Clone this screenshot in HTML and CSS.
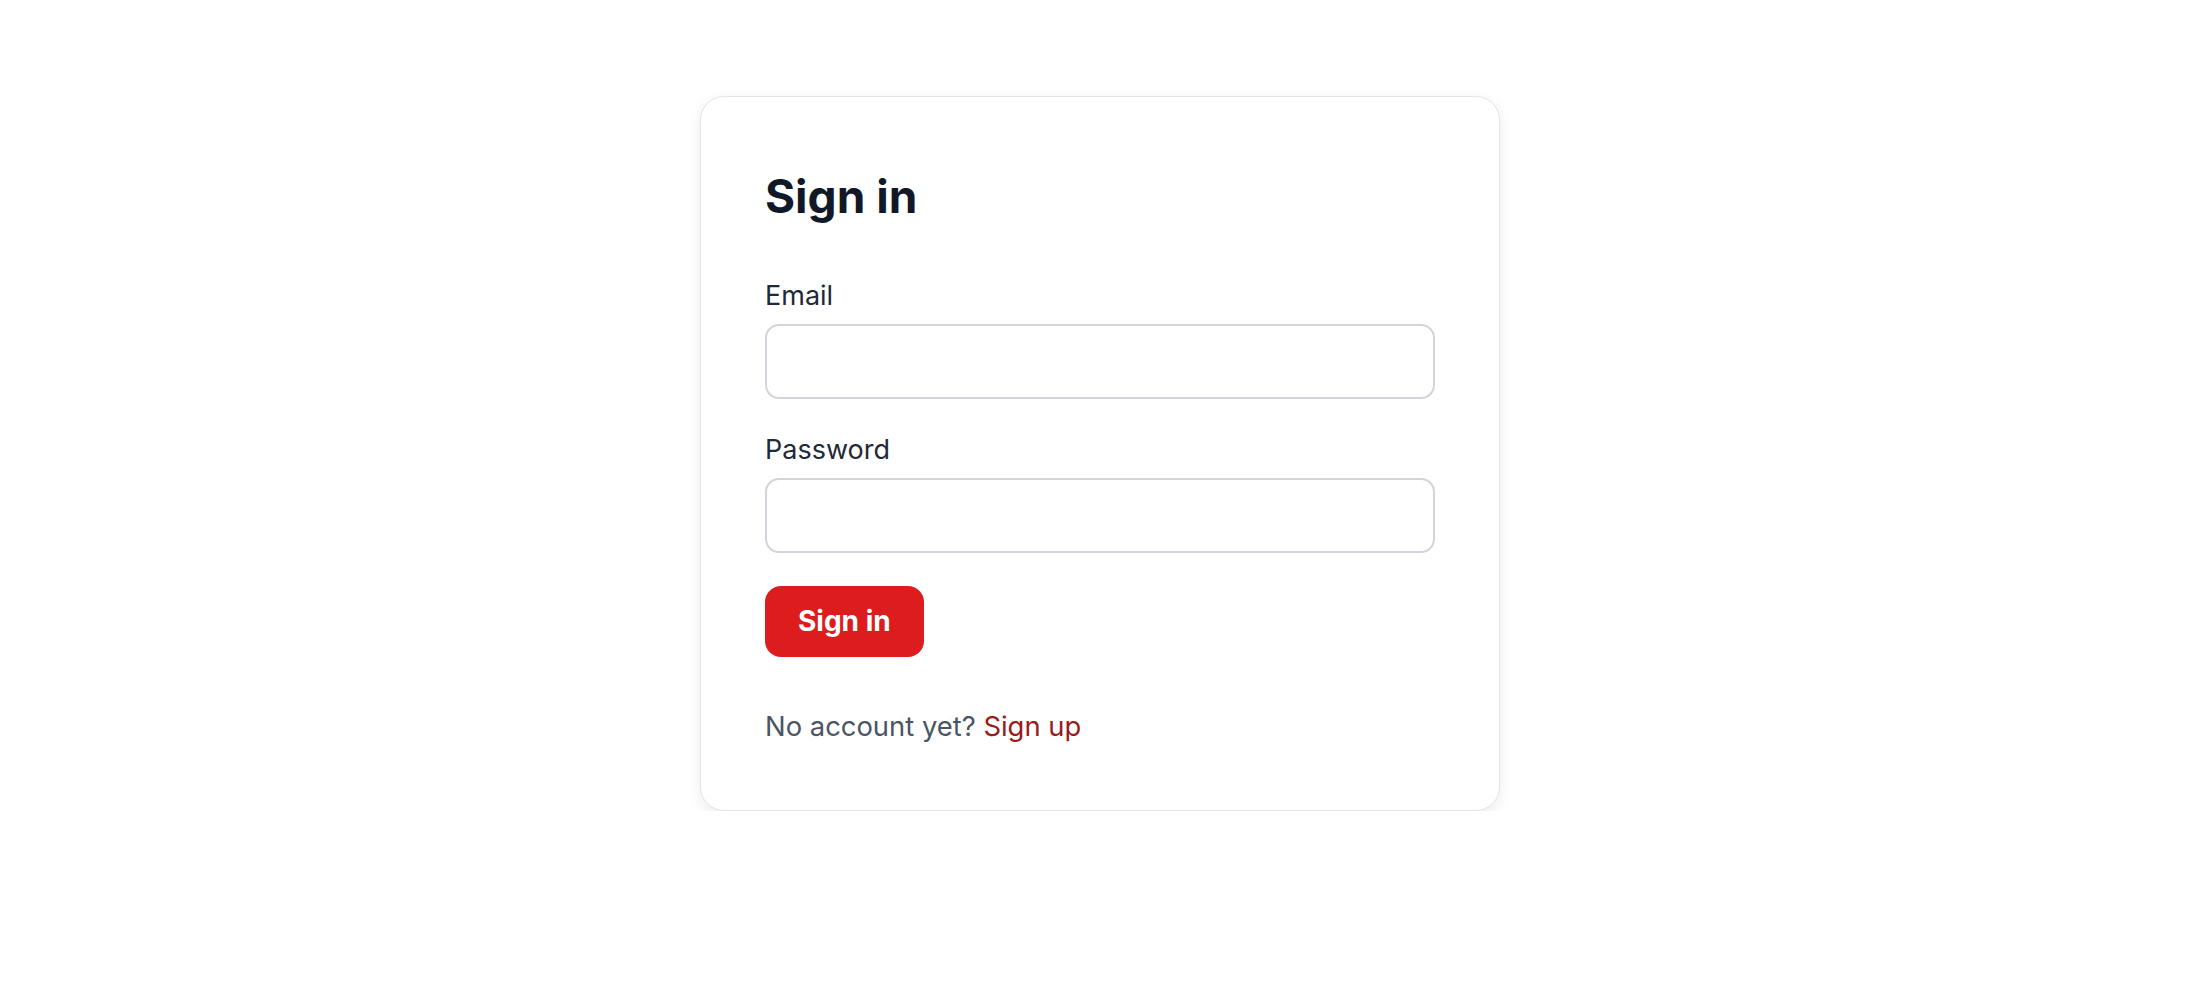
FILE: index.html
```html
<!DOCTYPE html>
<html lang="en">
<head>
    <meta charset="UTF-8">
    <meta name="viewport" content="width=device-width, initial-scale=1.0">
    <title>Sign in</title>
    <link rel="stylesheet" href="styles.css">
</head>
<body>
    <div class="card">
        <h1>Sign in</h1>
        <form class="form" onsubmit="return false">
            <div class="field">
                <label for="email">Email</label>
                <input type="email" id="email">
            </div>
            <div class="field">
                <label for="password">Password</label>
                <input type="password" id="password">
            </div>
            <div>
                <button type="submit">Sign in</button>
            </div>
        </form>
        <p class="footer">No account yet? <a href="#">Sign up</a></p>
    </div>
</body>
</html>
```

FILE: styles.css
```css
body {
    font-family: Inter, "Noto Sans", sans-serif;
    background-color: #ffffff;
    margin: 0;
}

.card {
    box-sizing: border-box;
    width: 800px;
    margin: 96px auto 0;
    padding: 64px;
    background-color: #ffffff;
    border: 1px solid #e2e4e9;
    border-radius: 24px;
    box-shadow: 0 4px 14px rgba(0, 0, 0, 0.08);
}

h1 {
    font-size: 46px;
    line-height: 70px;
    font-weight: 700;
    color: #111827;
    margin: 0 0 47px;
}

.form {
    display: flex;
    flex-direction: column;
    gap: 33px;
}

.field {
    display: flex;
    flex-direction: column;
    gap: 10px;
}

label {
    font-size: 27px;
    line-height: 36px;
    color: #1f2937;
}

input {
    box-sizing: border-box;
    width: 100%;
    height: 75px;
    padding: 0 20px;
    font-family: inherit;
    font-size: 24px;
    border: 2px solid #d1d5db;
    border-radius: 14px;
    background-color: #ffffff;
    outline: none;
}

button {
    font-family: inherit;
    font-size: 28px;
    font-weight: 700;
    line-height: 39px;
    color: #ffffff;
    background-color: #dc1c1d;
    border: none;
    border-radius: 16px;
    padding: 16px 33px;
    cursor: pointer;
}

button:hover {
    background-color: #b91c1c;
}

.footer {
    margin: 50px 0 0;
    font-size: 27.4px;
    line-height: 39px;
    color: #4b5563;
}

.footer a {
    color: #991b1b;
    text-decoration: none;
}
```
